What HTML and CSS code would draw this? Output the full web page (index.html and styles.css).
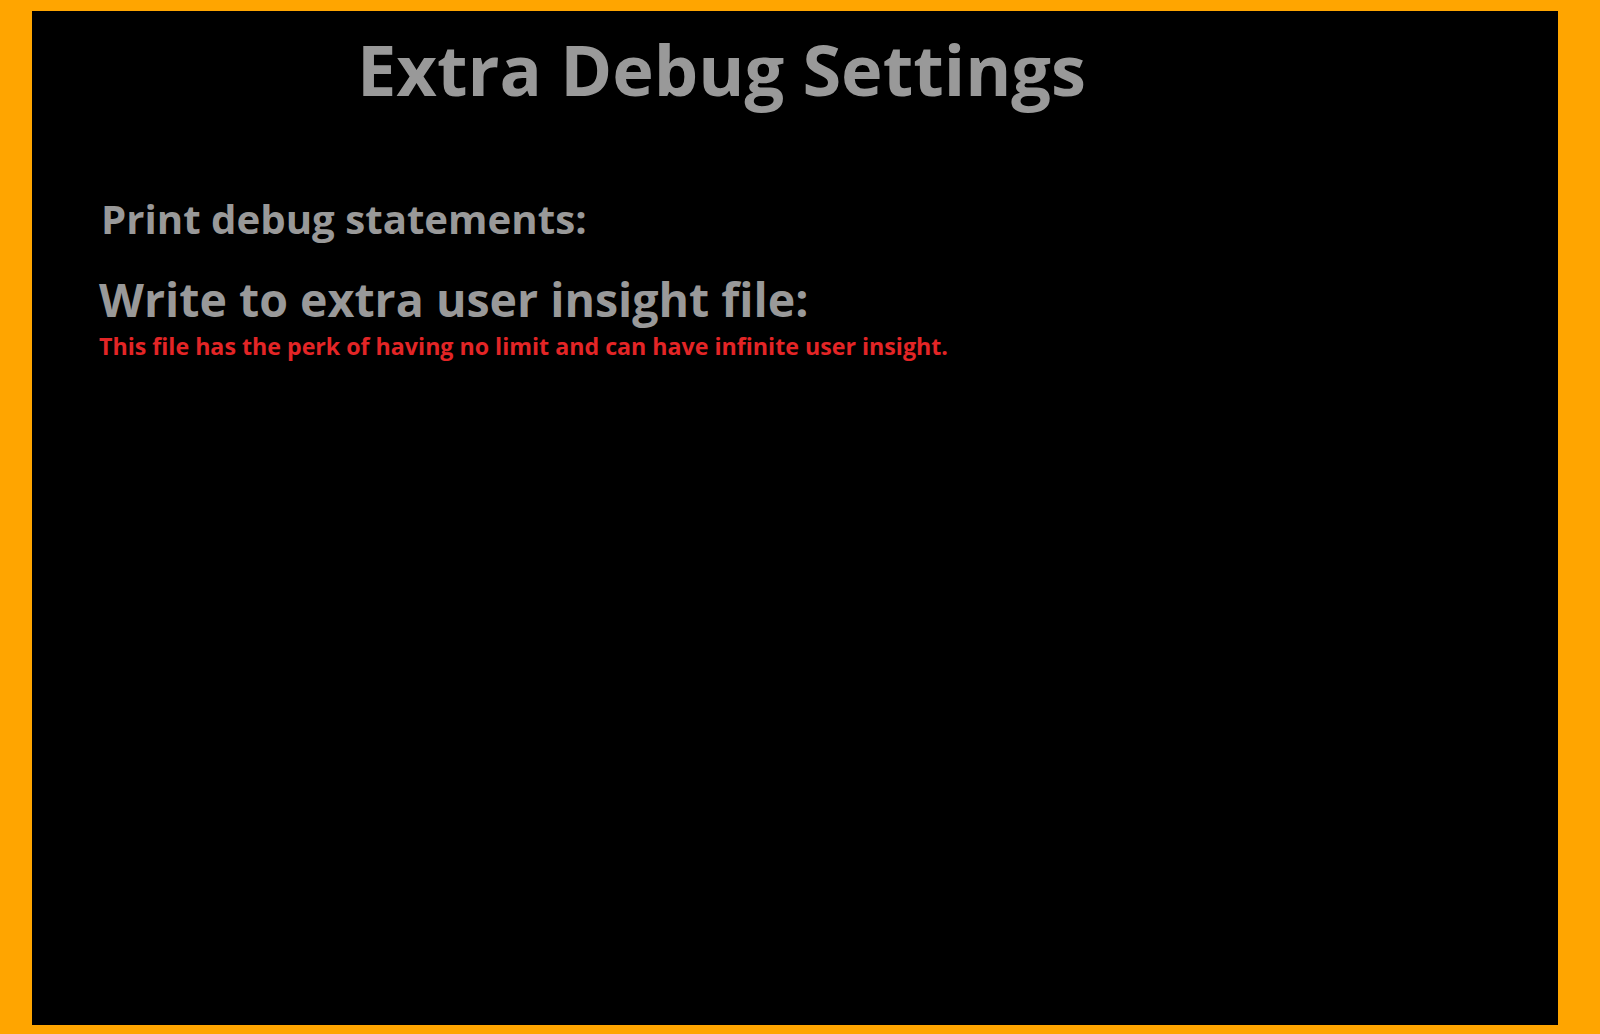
FILE: index.html
```html
<!DOCTYPE html>
<html lang="en">
<head>
<meta charset="utf-8">
<title>Extra Debug Settings</title>
<link rel="stylesheet" href="styles.css">
</head>
<body>
<main class="screen">
  <h1 class="title">Extra Debug Settings</h1>
  <section class="settings">
    <div class="setting setting-print">
      <h2 class="label label-print">Print debug statements:</h2>
    </div>
    <div class="setting setting-write">
      <h2 class="label label-write">Write to extra user insight file:</h2>
      <p class="note">This file has the perk of having no limit and can have infinite user insight.</p>
    </div>
  </section>
</main>
</body>
</html>
```
FILE: styles.css
```css
html, body {
  margin: 0;
  padding: 0;
}
body {
  background: #ffa500;
  height: 1034px;
  overflow: hidden;
  font-family: "Open Sans", "Noto Sans", sans-serif;
  font-weight: 700;
  color: #999999;
}
.screen {
  box-sizing: border-box;
  margin: 11px 42px 0 32px;
  height: 1014px;
  background: #000;
  padding: 23px 0 0 0;
  display: flex;
  flex-direction: column;
}
.title {
  margin: 0;
  padding-left: 325px;
  font-size: 70.3px;
  line-height: 1;
  font-weight: 700;
}
.settings {
  display: flex;
  flex-direction: column;
  padding-left: 67px;
  margin-top: 94.5px;
}
.setting {
  display: flex;
  flex-direction: column;
}
.label {
  margin: 0;
  line-height: 1;
  font-weight: 700;
}
.label-print {
  font-size: 40.2px;
  padding-left: 2px;
}
.setting-write {
  margin-top: 37px;
}
.label-write {
  font-size: 46.5px;
}
.note {
  margin: 12px 0 0 0;
  font-size: 23.2px;
  line-height: 1;
  color: #e32526;
}
```
